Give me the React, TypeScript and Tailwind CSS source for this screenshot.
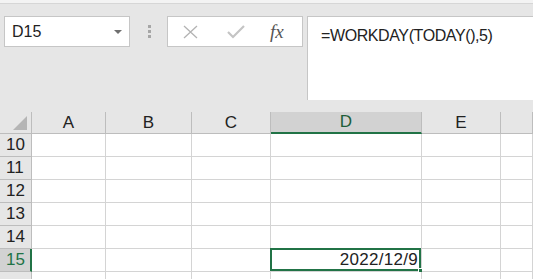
const cols = ["A", "B", "C", "D", "E", ""];
const rows = [10, 11, 12, 13, 14, 15, 16];

export default function App() {
  return (
    <div className="w-[533px] h-[279px] overflow-hidden bg-[#e6e6e6] text-[#222] font-['Liberation_Sans','Noto_Sans_CJK_SC',sans-serif]">
      <div className="h-[4px] bg-[#f3f3f3] border-b border-[#d6d6d6]" />

      {/* formula bar */}
      <div className="flex items-start pt-[12px] h-[108px]">
        <div className="ml-[4px] w-[126px] h-[31px] bg-white border border-[#c6c6c6] flex items-center justify-between pl-[7px] pr-[7px] text-[16px]">
          <span className="pt-[1px]">D15</span>
          <span className="w-0 h-0 border-l-[4px] border-r-[4px] border-t-[4px] border-l-transparent border-r-transparent border-t-[#6f6f6f]" />
        </div>
        <div className="ml-[18px] mt-[9px] flex flex-col gap-[2px]">
          <span className="w-[3px] h-[3px] bg-[#a6a6a6]" />
          <span className="w-[3px] h-[3px] bg-[#a6a6a6]" />
          <span className="w-[3px] h-[3px] bg-[#a6a6a6]" />
        </div>
        <div className="ml-[16px] w-[136px] h-[31px] bg-white border border-[#c6c6c6] flex items-center">
          <svg className="ml-[15px]" width="15" height="14" viewBox="0 0 15 14">
            <path d="M1 1 L14 13 M14 1 L1 13" stroke="#b3b3b3" strokeWidth="1.3" fill="none" />
          </svg>
          <svg className="ml-[29px]" width="18" height="14" viewBox="0 0 18 14">
            <path d="M1 7 L6 12 L17 1" stroke="#c4c4c4" strokeWidth="2.2" fill="none" />
          </svg>
          <span className="ml-[25px] italic text-[19px] leading-none text-[#555] font-['Liberation_Serif',serif]">fx</span>
        </div>
        <div className="ml-[4px] flex-1 h-[84px] bg-white border-l border-t border-[#c6c6c6] pl-[13px] pt-[7px] text-[16px] tracking-[-0.4px]">
          =WORKDAY(TODAY(),5)
        </div>
      </div>

      {/* sheet */}
      <div className="grid grid-cols-[32px_74px_86px_79px_151px_79px_1fr] text-[17px]">
        <div className="h-[22px] border-r border-b border-[#bdbdbd] flex items-end justify-end pr-[4px] pb-[3px]">
          <div className="w-[14px] h-[14px] bg-[#b5b5b5] [clip-path:polygon(100%_0,100%_100%,0_100%)]" />
        </div>
        {cols.map((c, i) => (
          <div
            key={i}
            className={
              c === "D"
                ? "h-[22px] bg-[#d2d2d2] border-r border-[#bdbdbd] border-b-2 border-b-[#217346] flex items-center justify-center text-[#1e5e3a]"
                : "h-[22px] border-r border-b border-[#bdbdbd] flex items-center justify-center"
            }
          >
            {c}
          </div>
        ))}
        {rows.map((r) => (
          <Row key={r} n={r} />
        ))}
      </div>
    </div>
  );
}

function Row({ n }: { n: number }) {
  const sel = n === 15;
  return (
    <>
      <div
        className={
          sel
            ? "h-[23px] bg-[#d2d2d2] border-r-2 border-r-[#217346] border-b border-b-[#bdbdbd] flex items-center pl-[6px] text-[#217346]"
            : "h-[23px] border-r border-b border-[#bdbdbd] flex items-center pl-[6px]"
        }
      >
        {n < 16 ? n : ""}
      </div>
      {cols.map((c, i) => (
        <div key={i} className="relative h-[23px] bg-white border-r border-b border-[#d4d4d4] flex items-center justify-end pr-[3px]">
          {sel && c === "D" && (
            <>
              <span className="relative tracking-[0.3px]">2022/12/9</span>
              <div className="absolute -left-[1px] -top-[1px] right-0 bottom-0 border-2 border-[#217346]" />
              <div className="absolute -right-[3px] -bottom-[3px] w-[6px] h-[6px] bg-[#217346] border border-white" />
            </>
          )}
        </div>
      ))}
    </>
  );
}
